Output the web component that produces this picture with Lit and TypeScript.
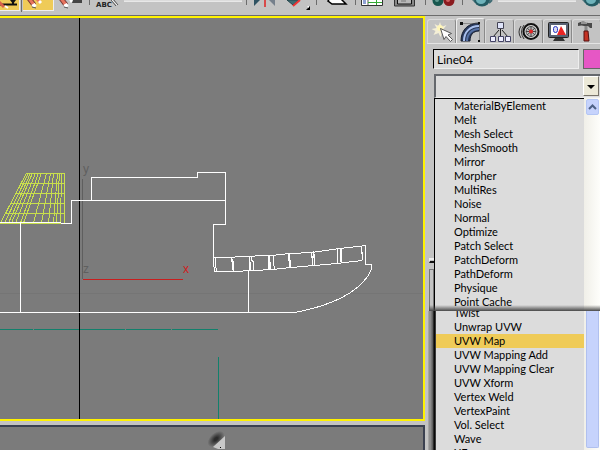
import { LitElement, html, svg, css } from "lit";
import { customElement, state } from "lit/decorators.js";

const magnet = (x: number) => svg`
  <path d="M${x - 3} -3 L${x + 3} 5" stroke="#7a3a34" stroke-width="5"/>
  <path d="M${x - 3} -3 L${x + 3} 5" stroke="#e8745f" stroke-width="3"/>
  <path d="M${x + 2} 4 L${x + 4} 7" stroke="#fff" stroke-width="4"/>
  <path d="M${x + 1} 7 L${x + 5} 8" stroke="#555" stroke-width="1"/>`;

const teapot = (x: number) => svg`
  <path d="M${x} 0 h2 l3 3 h-2z" fill="#50787e"/>
  <ellipse cx="${x + 10}" cy="0" rx="8" ry="6.5" fill="#255c64"/>
  <ellipse cx="${x + 9}" cy="0" rx="5" ry="4" fill="#6fb3bb"/>
  <path d="M${x + 17} 3 l3 -3" stroke="#3c6a72" stroke-width="2"/>`;

type Tool = { kind: "tool"; name: string; w: number; on?: boolean; art: unknown };
type Item = Tool | { kind: "sep" } | { kind: "combo"; name: string; size: string };
const sep: Item = { kind: "sep" };

const TOOLS: Item[] = [
  { kind: "tool", name: "Snap", w: 19, on: true, art: svg`
    <path d="M0 4.500H17M13 0v4" stroke="#111" stroke-width="2"/><path d="M10 0h6l-3 4z" fill="#111"/>
    <path d="M-1 2 L4 7" stroke="#d8604c" stroke-width="3"/><path d="M5 6l3 2" stroke="#fff" stroke-width="2"/>` },
  sep,
  { kind: "tool", name: "Angle snap", w: 30, on: true, art: svg`
    ${magnet(8)}<path d="M13 -2l4 4" stroke="#e8745f" stroke-width="3"/><path d="M16 1l2 2" stroke="#fff" stroke-width="3"/>` },
  { kind: "tool", name: "Percent snap", w: 34, art: svg`
    ${magnet(9)}<path d="M16 -2l2 4" stroke="#fff" stroke-width="3"/><path d="M19 0h9v3h-10z" fill="#444"/>` },
  sep,
  { kind: "tool", name: "Named selection sets", w: 30, art: svg`
    <text x="5" y="7" class="abc">ABC</text><path d="M20 0l5 6M22 -1l5 6" stroke="#555" stroke-width="1"/><path d="M21 0l5 5" stroke="#eee" stroke-width="1"/>` },
  { kind: "combo", name: "Selection set", size: "wide" },
  sep,
  { kind: "tool", name: "Mirror", w: 32, art: svg`
    <path d="M6 0v6l6 -6z" fill="#2f5262"/><path d="M17 0v7" stroke="#d84a4a" stroke-width="2"/><path d="M21 0l6 6v-6z" fill="#76808c"/>` },
  { kind: "tool", name: "Align", w: 35, art: svg`
    <path d="M7 0l6 5 6 -5z" fill="#3d6b72" stroke="#24454b"/><path d="M13 6l7 -6" stroke="#ee3434" stroke-width="2"/>
    <path d="M30 6v4h-4z" fill="#000"/><path d="M27 6h2v2z" fill="#fff"/>` },
  sep,
  { kind: "tool", name: "Layers", w: 36, art: svg`<path d="M12 -2L10 1l4 3h14l-6 -6z" fill="#fff" stroke="#000" stroke-width="1.500"/>` },
  sep,
  { kind: "tool", name: "Curve editor", w: 30, art: svg`
    <path d="M4.500 -1v6.500h21v-6.500z" fill="#fff" stroke="#333"/><path d="M11 0v5" stroke="#555"/><path d="M6 1h3M6 3h3" stroke="#24a" stroke-width="1"/>
    <path d="M11 2.500h14M19.500 0v5" stroke="#3a3"/>` },
  { kind: "tool", name: "Schematic view", w: 37, art: svg`
    <path d="M7.500 -1v7h20v-7z" fill="#888" stroke="#333"/><path d="M10.500 -1v5h14v-5z" fill="#b8b8b8" stroke="#111"/><path d="M14 1h3M18 0v2" stroke="#777"/>` },
  sep,
  { kind: "tool", name: "Material editor", w: 34, art: svg`
    <circle cx="11" cy="0.500" r="5.500" fill="#17574f"/><circle cx="22" cy="0.500" r="5.500" fill="#8b1c20"/>
    <circle cx="10" cy="0" r="2" fill="#5f9a90"/><circle cx="21" cy="0" r="2" fill="#d06060"/>` },
  sep,
  { kind: "tool", name: "Render scene", w: 31, art: teapot(8) },
  { kind: "combo", name: "Render type", size: "narrow" },
  { kind: "tool", name: "Quick render", w: 21, art: teapot(3) },
];

const TABS = [
  { name: "Create", art: svg`
    <path d="M12 2l1.500 5 5 -2 -3 4 3 3 -4 0 -2 5 -2 -4 -5 2 2 -4 -4 -2 5 -1 -2 -4 4 2z" fill="#f4efd6"/>
    <circle cx="12" cy="8" r="3" fill="#fff6b8"/>
    <path d="M12.500 8.500l3.500 11 2 -3 4.500 5 2 -2 -4.500 -4.500 3.500 -1.500z" fill="#fff" stroke="#555"/>` },
  { name: "Modify", art: svg`
    <path d="M4 22C4 11 11 4 22 4v8c-6 0 -9 4 -9 10z" fill="#2a3a5c" stroke="#151d30"/>
    <path d="M7 22C7 13 13 7 22 7" stroke="#a9c0ee" stroke-width="2" fill="none"/>
    <path d="M10 22C10 15 15 10 22 10" stroke="#5672a6" stroke-width="2" fill="none"/>
    <path d="M4.500 4.500H22.500V22" stroke="#555" stroke-dasharray="1 1" fill="none"/>
    <path d="M3 3h3v3h-3zM21 3h2v2h-2zM21 21h2v2h-2z" fill="#111"/>` },
  { name: "Hierarchy", art: svg`
    <path d="M14.500 9v8M13 10l-6 7M16 10l6 7" stroke="#222" fill="none"/>
    <path d="M11.500 2.500h6v6h-6z" fill="#dfe4fa" stroke="#445"/><path d="M4.500 16.500h5v5h-5zM12.500 16.500h5v5h-5zM19.500 16.500h5v5h-5z" fill="#eef" stroke="#446"/>` },
  { name: "Motion", art: svg`
    <path d="M6 6q-4 6 0 12M9 5q-5 7 0 14" stroke="#333" fill="none"/>
    <circle cx="16" cy="11.500" r="7.500" fill="#ddd" stroke="#111" stroke-width="2"/><circle cx="16" cy="11.500" r="5" fill="#bbb" stroke="#555"/>
    <path d="M16 6v11M11 11.500h10M12 8l8 7M20 8l-8 7" stroke="#444"/><circle cx="16" cy="11.500" r="2" fill="#e02828"/>` },
  { name: "Display", art: svg`
    <rect x="4.500" y="2.500" width="20" height="15" rx="1" fill="#596273" stroke="#222"/><rect x="7" y="5" width="15" height="10" fill="#fff"/>
    <rect x="9.500" y="6.500" width="4" height="6" rx="2" fill="#dde" stroke="#2838c8"/><path d="M13 15l4 -9 5 9z" fill="#e82424"/>
    <path d="M11 18h8l2 3h-12z" fill="#333"/>` },
  { name: "Utilities", art: svg`
    <path d="M5 3q5 -3 10 0l4 0v5h-2l-2 -2h-4q-2 -1 -6 0z" fill="#4a4a4a"/><path d="M8 3h6" stroke="#ddd"/>
    <path d="M13 6v6" stroke="#888" stroke-width="3"/><path d="M11 11h4l1 10h-5z" fill="#c43224" stroke="#511"/>` },
];

const UPPER = ["MaterialByElement", "Melt", "Mesh Select", "MeshSmooth", "Mirror", "Morpher", "MultiRes", "Noise", "Normal",
  "Optimize", "Patch Select", "PatchDeform", "PathDeform", "Physique", "Point Cache"];
const LOWER = ["Twist", "Unwrap UVW", "UVW Map", "UVW Mapping Add", "UVW Mapping Clear", "UVW Xform", "Vertex Weld",
  "VertexPaint", "Vol. Select", "Wave", "XForm"];

/* Slanted ribs of the deckhouse mesh: [top x, bottom x]. */
const RIBS = [[26, 0], [28, 4], [30, 8], [32, 11], [35, 15], [38, 20], [41, 23], [46, 33], [50, 41], [53, 48], [57, 53], [59, 56], [61, 60], [64, 64]];

const scene = svg`
  <g class="lines">
    <path class="faint" d="M0 275.500H423"/>
    <path class="teal" d="M0 311.500H33M34 311.500H125M126 311.500H171M172 311.500H218M218.500 339V401"/>
    <path class="black" d="M79.500 0V401"/>
    <path class="axis" d="M82.500 161V261"/>
    <path class="red" d="M83 261.500H183"/>
    <path class="mesh" d="M26 155.500H65M22 165.500H64M16 175.500H64M11 185.500H64M5 195.500H64M0 205.500H64"/>
    <path class="mesh" d="${RIBS.map(([t, b]) => `M${t}.5 155L${b}.5 205`).join("")}"/>
    <path class="white" d="M0 204.500H61M61 205.500H71.500V182.500H225M20.500 205V294M91.500 182V159.500H197.500V154.500H225.500V206.500H213.500V244"/>
    <path class="white" d="M0 294.500H295Q350 284 368 258Q373 250 371.500 247L370 246.500H365.500V227.500L362 228L340 230.500L312 234.500L290 235.500L272 237.500L238 238.500L232 239.500H213.500V245L214.500 253.500H232.500L273 251.500L291 249.500L337 245.500L362 242.500"/>
    <path class="white" d="M248.500 252V294M215.500 239V246L216.500 253M231.500 239V243L233.500 244V253M232.500 241V252M249.500 238V252M250.500 244V252M251.500 238V242L253.500 244V252M268.500 237V251M269.500 238V251M270.500 244V251M273.500 237V243L274.500 252M288.500 236V243M289.500 236V249M290.500 242V249M311.500 234V240M312.500 238V248M313.500 233V240M314.500 236V248M337.500 231V246M340.500 230V244M341.500 230V244M361.500 228V236M362.500 234V242"/>
  </g>
  <text class="mark" x="83" y="155">y</text>
  <text class="mark" x="83" y="255">z</text>
  <text class="mark hot" x="183" y="255">x</text>`;

@customElement("app-root")
export class AppRoot extends LitElement {
  @state() private tab = "Modify";
  @state() private picked = "UVW Map";

  static styles = css`
    :host { display: block; font-family: Lato, "Liberation Sans", sans-serif; font-size: 11px; color: #000; }
    * { box-sizing: border-box; }
    button, select, input { font: inherit; color: inherit; margin: 0; padding: 0; border: 0; border-radius: 0; background: none; appearance: none; display: block; }
    svg { display: block; fill: none; }
    .app { display: grid; grid-template: 16px minmax(0, 1fr) / minmax(0, 1fr) 175px; height: 100vh; background: #c3c3c3; overflow: hidden; }
    .toolbar { grid-column: 1 / 3; display: flex; align-items: flex-start; border-bottom: 1px solid #6c6c6c; overflow: hidden; }
    .tool { flex: none; height: 15px; }
    .tool.on { height: 11px; background: #efcb58; border-bottom: 1px solid #eee; border-right: 1px solid #eee; overflow: hidden; }
    .sep { flex: none; width: 1px; height: 5px; margin: 0 1px; background: #6c6c6c; }
    .on + .sep { height: 12px; }
    .combo { height: 2px; margin: 0 3px; background: #dcdcdc; border-bottom: 1px solid #e8e8e8; }
    .wide { flex: 119 1 0; }
    .narrow { flex: 79 1 0; }
    .abc { font: bold 7px "DejaVu Sans", sans-serif; fill: #222; }

    .views { display: grid; grid-template-rows: minmax(0, 1fr) 25px; gap: 4px; }
    .view { overflow: hidden; background: #7b7b7b; }
    .view svg { width: 100%; height: 100%; }
    .active { border: 2px solid #fff200; border-left: 0; }
    .idle { border: solid #3b4150; border-width: 2px 2px 0 0; }
    .lines { shape-rendering: crispEdges; }
    .white { stroke: #fff; }
    .black { stroke: #000; }
    .teal { stroke: #12806c; }
    .axis { stroke: #5f5f5f; }
    .faint { stroke: #757575; }
    .red { stroke: #c81e1e; }
    .mesh { stroke: #c9e04c; }
    .mark { font: 12px "Liberation Sans", sans-serif; fill: #5f5f5f; }
    .hot { fill: #d02020; }

    .panel { display: flex; flex-direction: column; padding-top: 2px; min-height: 0; }
    .tabs { display: flex; height: 26px; margin-left: 2px; border-bottom: 1px solid #e4e4e4; align-items: flex-end; overflow: hidden; }
    .tab { flex: none; width: 29px; height: 24px; border: solid; border-width: 1px 1px 0; border-color: #dadada #8a8a8a #dadada #dadada; border-radius: 3px 3px 0 0; overflow: hidden; }
    .tab[aria-selected="true"] { height: 25px; border-color: #eee #8a8a8a #eee #eee; }
    .name { display: flex; gap: 4px; height: 20px; margin: 5px 0 0 8px; }
    .name input { flex: 1; min-width: 0; padding: 0 3px; font-size: 12px; background: #dcdcdc; border: 1px solid #eee; border-top: 1px solid #000; border-left: 1px solid #000; }
    .swatch { width: 17px; background: #e657c5; border: 1px solid #666; border-right: 0; }
    .mods { position: relative; height: 24px; margin: 5px 0 0 9px; }
    .mods select { width: 100%; height: 24px; background: #dcdcdc; border: 2px solid #65686d; border-right: 0; border-bottom: 1px solid #eee; }
    .drop { position: absolute; right: 1px; top: 2px; width: 16px; height: 20px; background: #ece9d8; border: 1px solid #fff; border-right-color: #77736a; border-bottom-color: #77736a; pointer-events: none; }
    .body { flex: 1; min-height: 0; display: flex; flex-direction: column; }
    .pane { display: flex; overflow: hidden; }
    .upper { flex: none; height: 213px; }
    .upper ul { border: solid #000; border-width: 1px 0 0 1px; }
    .edge { flex: none; width: 9px; padding: 160px 0 0 4px; }
    .knob { height: 5px; border: solid; border-color: #eee #eee #111; border-width: 2px 0 2px 1px; }
    .frame { height: 60px; margin: 6px 0 0; border: solid #777; border-width: 1px 1px 0 1px; }
    .lower { flex: 1; min-height: 0; background: linear-gradient(90deg, #c3c3c3 3px, #888 4px, #999 5px, #555 8px, #000 9px, #111 10px, #666 11px); padding-left: 11px; }
    .shade { flex: none; height: 6px; margin: -6px 0 0 4px; position: relative; background: linear-gradient(#9990, #484848); }
    ul { flex: 1; min-width: 0; margin: 0; padding: 0; list-style: none; background: #dcdcdc; }
    .lower ul { margin-top: -5px; }
    .opt { width: 100%; height: 14px; padding-left: 19px; line-height: 14px; text-align: left; white-space: nowrap; }
    .lower .opt { padding-left: 18px; }
    .opt[aria-selected="true"] { background: #efcb58; }
    .scroll { flex: none; width: 16px; padding: 1px 1px 0 2px; background: linear-gradient(90deg, #f0efe8, #fefefb); }
    .lower .scroll { padding-top: 0; }
    .up { width: 13px; height: 16px; background: #c6d3fc; border: 1px solid #b4c6f4; border-radius: 2px; }
    .thumb { height: calc(100% - 2px); background: #c6d3fc; border: 1px solid #b0c0ee; border-top: 0; border-radius: 0 0 2px 2px; }
  `;

  private tool(i: Item) {
    if (i.kind === "sep") return html`<span class="sep"></span>`;
    if (i.kind === "combo") return html`<select class="combo ${i.size}" aria-label=${i.name}></select>`;
    return html`<button class="tool ${i.on ? "on" : ""}" aria-label=${i.name}><svg width=${i.w} height="15">${i.art}</svg></button>`;
  }

  private options(names: string[]) {
    return html`<ul role="listbox" aria-label="Modifiers">${names.map((n) => html`
      <li role="presentation"><button class="opt" role="option" aria-selected=${n === this.picked ? "true" : "false"}
        @click=${() => (this.picked = n)}>${n}</button></li>`)}</ul>`;
  }

  render() {
    return html`
      <main class="app">
        <div class="toolbar" role="toolbar">${TOOLS.map((t) => this.tool(t))}</div>
        <div class="views">
          <section class="view active" aria-label="Front view"><svg>${scene}</svg></section>
          <section class="view idle" aria-label="Perspective view">
            <svg>
              <defs><radialGradient id="spot"><stop offset="0.200" stop-color="#2c2c2c"/><stop offset="1" stop-color="#7b7b7b"/></radialGradient></defs>
              <ellipse cx="216" cy="12" rx="10" ry="6" fill="url(#spot)" transform="rotate(-42 216 12)"/>
              <path d="M225 9V22H218L213 20z" fill="#c8c8c8"/><path d="M220 20h1v1h-1z" fill="#000"/>
            </svg>
          </section>
        </div>
        <aside class="panel">
          <div class="tabs" role="tablist">${TABS.map((t) => html`
            <button class="tab" role="tab" aria-label=${t.name} aria-selected=${t.name === this.tab ? "true" : "false"}
              @click=${() => (this.tab = t.name)}><svg width="28" height="24">${t.art}</svg></button>`)}</div>
          <div class="name">
            <input aria-label="Object name" .value=${"Line04"}>
            <button class="swatch" aria-label="Object colour"></button>
          </div>
          <div class="mods">
            <select aria-label="Modifier list"></select>
            <span class="drop"><svg width="14" height="18"><path d="M3 8h8l-4 4z" fill="#000"/></svg></span>
          </div>
          <div class="body">
            <div class="pane upper">
              <div class="edge"><div class="knob"></div><div class="frame"></div></div>
              ${this.options(UPPER)}
              <div class="scroll"><button class="up" aria-label="Scroll up"><svg width="11" height="14"><path d="M2 9l3.500 -3.500 3.500 3.500" stroke="#4d6185" stroke-width="2"/></svg></button></div>
            </div>
            <div class="shade"></div>
            <div class="pane lower">
              ${this.options(LOWER)}
              <div class="scroll"><div class="thumb"></div></div>
            </div>
          </div>
        </aside>
      </main>`;
  }
}
